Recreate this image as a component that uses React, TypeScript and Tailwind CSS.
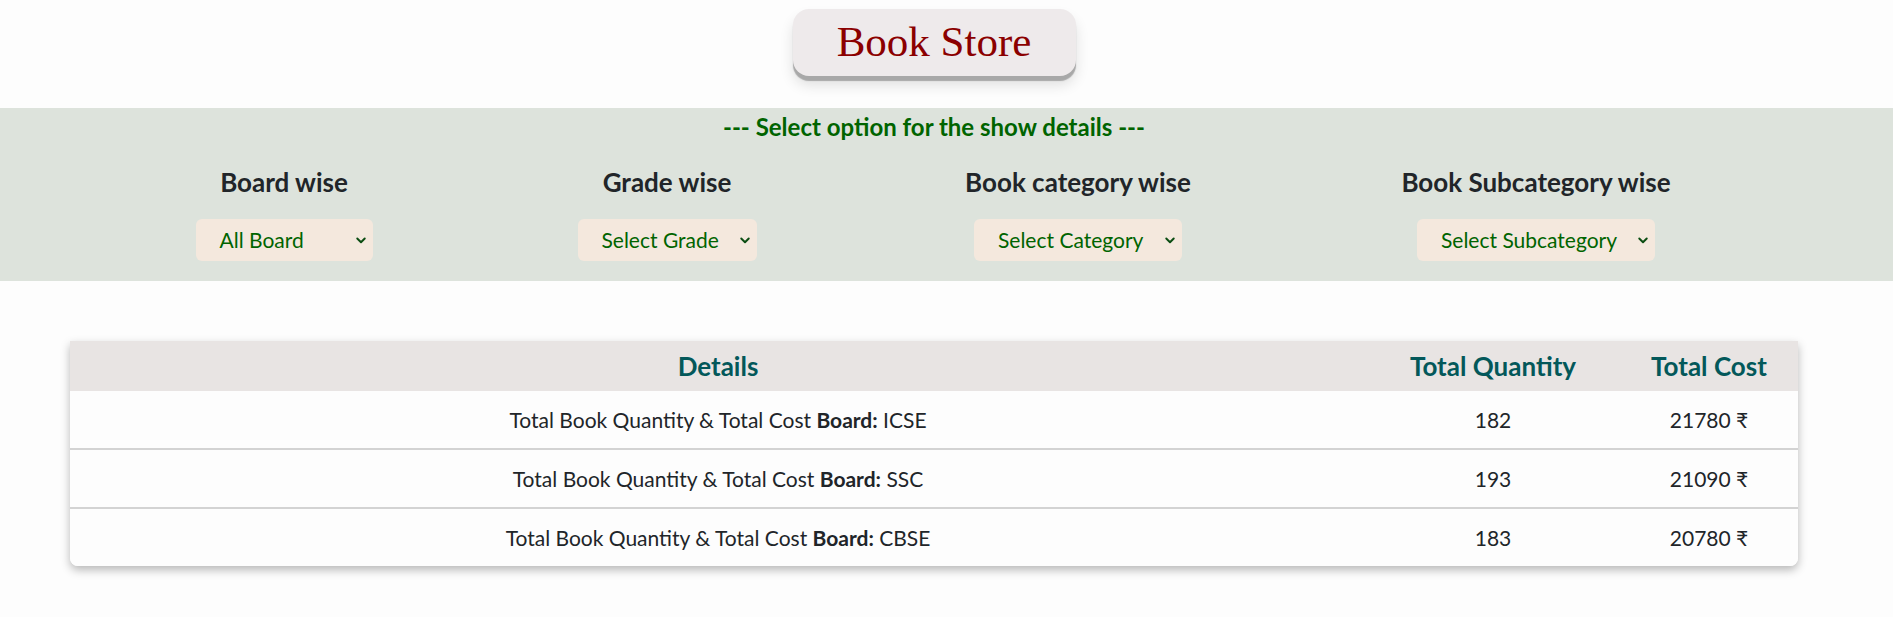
import React from "react";

const filters = [
  { title: "Board wise", value: "All Board", w: "w-[177px]" },
  { title: "Grade wise", value: "Select Grade", w: "w-[179px]" },
  { title: "Book category wise", value: "Select Category", w: "w-[208px]" },
  { title: "Book Subcategory wise", value: "Select Subcategory", w: "w-[238px]" },
];

const rows = [
  { board: "ICSE", qty: 182, cost: 21780 },
  { board: "SSC", qty: 193, cost: 21090 },
  { board: "CBSE", qty: 183, cost: 20780 },
];

function Chevron() {
  return (
    <svg width="12" height="12" viewBox="0 0 16 16" fill="none" className="shrink-0">
      <path d="M3 6l5 5 5-5" stroke="#0b4d12" strokeWidth="2.6" strokeLinecap="round" strokeLinejoin="round" />
    </svg>
  );
}

export default function App() {
  return (
    <div className="min-h-screen w-full bg-[#fdfdfd] font-['Lato','Noto_Sans',sans-serif] text-[#212529]">
      {/* Heading */}
      <div className="w-[1868px] flex justify-center pt-[9px]">
        <div className="w-[283px] h-[67px] flex items-center justify-center rounded-2xl bg-[#eeeaeb] shadow-[0_5px_1px_#a8a8a8,0_9px_14px_rgba(0,0,0,0.12)]">
          <h1 className="font-['Liberation_Serif','Times_New_Roman',serif] text-[43px] leading-none text-[#8b0000] pb-[2px]">
            Book Store
          </h1>
        </div>
      </div>

      {/* Filters band */}
      <div className="mt-[32px] w-full bg-[#dde3dc] pt-[4px] pb-[20px]">
        <div className="w-[1868px]">
          <p className="text-center text-[24px] leading-[30px] font-bold text-[#006400]">
            --- Select option for the show details ---
          </p>
          <div className="mt-[25px] pl-[100px] grid grid-cols-[368px_398px_424px_492px]">
            {filters.map((f) => (
              <div key={f.title} className="flex flex-col items-center">
                <h5 className="text-[26px] leading-[30px] font-bold text-[#212529]">{f.title}</h5>
                <div
                  className={`mt-[22px] h-[42px] ${f.w} flex items-center justify-between pl-[24px] pr-[6px] rounded-md bg-[#f4e8dd] text-[21px] text-[#006400]`}
                >
                  <span>{f.value}</span>
                  <Chevron />
                </div>
              </div>
            ))}
          </div>
        </div>
      </div>

      {/* Table */}
      <div className="w-[1868px] px-[70px] pt-[60px] pb-[40px]">
        <div className="w-full rounded-b-lg bg-white shadow-[0_4px_10px_rgba(0,0,0,0.28)] overflow-hidden">
          <div className="grid grid-cols-[1296px_254px_178px] h-[50px] items-center bg-[#e8e4e3] text-[26px] font-bold text-[#03585a]">
            <div className="text-center">Details</div>
            <div className="text-center">Total Quantity</div>
            <div className="text-center">Total Cost</div>
          </div>
          {rows.map((r, i) => (
            <div
              key={r.board}
              className={`grid grid-cols-[1296px_254px_178px] h-[57px] items-center bg-[#fdfdfd] text-[21px] ${
                i < rows.length - 1 ? "h-[59px] border-b-2 border-[#d3d3d3]" : ""
              }`}
            >
              <div className="text-center">
                Total Book Quantity &amp; Total Cost <b>Board:</b> {r.board}
              </div>
              <div className="text-center">{r.qty}</div>
              <div className="text-center">{r.cost} ₹</div>
            </div>
          ))}
        </div>
      </div>
    </div>
  );
}
